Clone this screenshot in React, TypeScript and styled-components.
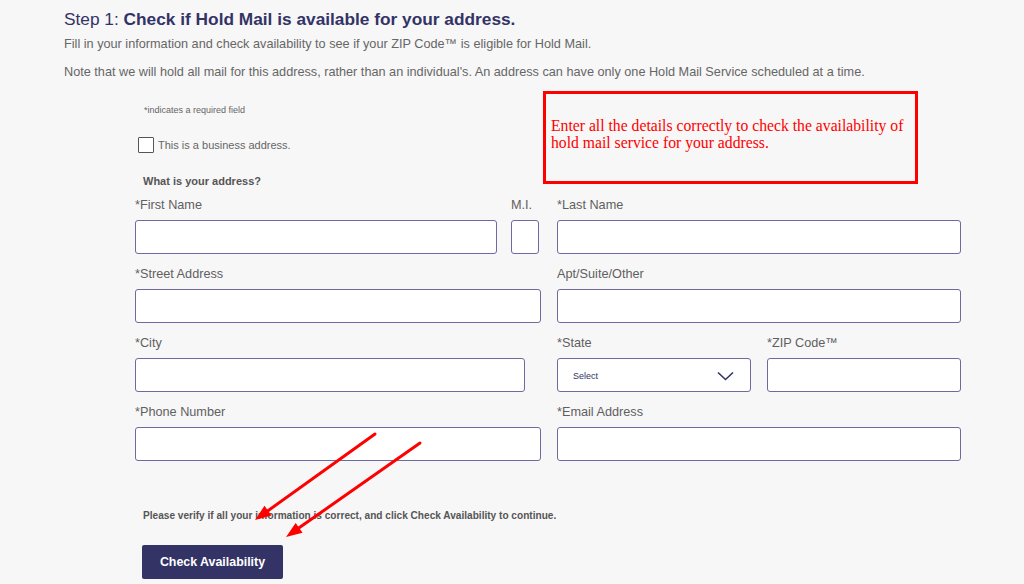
import styled, { createGlobalStyle } from "styled-components";

const GlobalStyle = createGlobalStyle`
  html, body {
    margin: 0;
    padding: 0;
    background: #f7f7f7;
  }
  body {
    font-family: "Liberation Sans", Arial, sans-serif;
  }
`;

const Page = styled.div`
  position: relative;
  width: 1024px;
  height: 584px;
  overflow: hidden;
  padding: 8px 0 0 64px;
  box-sizing: border-box;
  background: #f7f7f7;
`;

const Heading = styled.h1`
  margin: 0;
  font-size: 17.3px;
  line-height: 22px;
  font-weight: normal;
  color: #333366;
  b {
    font-weight: bold;
  }
`;

const Intro = styled.p<{ $mt: number }>`
  margin: ${(p) => p.$mt}px 0 0;
  font-size: 12.7px;
  line-height: 16px;
  color: #666;
`;

const Form = styled.form`
  margin: 0 0 0 71px;
`;

const TopSection = styled.div`
  display: flex;
  margin-top: 11px;
  height: 107px;
`;

const TopLeft = styled.div`
  width: 408px;
  display: flex;
  flex-direction: column;
`;

const RequiredNote = styled.div`
  font-size: 9px;
  line-height: 12px;
  color: #666;
  margin: 13px 0 0 9px;
`;

const CheckRow = styled.label`
  display: flex;
  align-items: center;
  gap: 4px;
  margin: 21px 0 0 3px;
  font-size: 11px;
  color: #666;
`;

const CheckBox = styled.span`
  width: 16px;
  height: 16px;
  box-sizing: border-box;
  border: 1px solid #555;
  border-radius: 1px;
  background: #fff;
`;

const AddressTitle = styled.div`
  margin: 21px 0 0 8px;
  font-size: 11px;
  line-height: 14px;
  font-weight: bold;
  color: #555;
`;

const Callout = styled.div`
  width: 375px;
  height: 93px;
  box-sizing: border-box;
  border: 3px solid #ff0000;
  padding: 23px 4px 0 5px;
  font-family: "Liberation Serif", "Times New Roman", serif;
  font-size: 15.7px;
  line-height: 17px;
  color: #ff0000;
`;

const Rows = styled.div`
  display: flex;
  flex-direction: column;
  gap: 13px;
`;

const Row = styled.div`
  display: flex;
`;

const Field = styled.div<{ $w: number; $ml?: number }>`
  width: ${(p) => p.$w}px;
  margin-left: ${(p) => p.$ml ?? 0}px;
  display: flex;
  flex-direction: column;
  gap: 7px;
`;

const Label = styled.span`
  font-size: 12.7px;
  line-height: 15px;
  color: #5f5f5f;
  white-space: nowrap;
`;

const Input = styled.div`
  height: 34px;
  box-sizing: border-box;
  background: #fff;
  border: 1px solid #6f6a9e;
  border-radius: 3px;
`;

const Select = styled(Input)`
  display: flex;
  align-items: center;
  justify-content: space-between;
  padding: 2px 16px 0 15px;
  font-size: 9px;
  color: #333366;
`;

const Verify = styled.div`
  margin: 49px 0 0 8px;
  font-size: 10.1px;
  line-height: 12px;
  font-weight: bold;
  color: #555;
`;

const SubmitButton = styled.button`
  margin: 23px 0 0 7px;
  width: 141px;
  height: 34px;
  border: none;
  border-radius: 2px;
  background: #333366;
  color: #fff;
  font-family: "Liberation Sans", Arial, sans-serif;
  font-size: 12.4px;
  font-weight: bold;
  padding: 0;
`;

const Overlay = styled.svg`
  position: absolute;
  left: 0;
  top: 0;
  pointer-events: none;
`;

function Arrow({ x1, y1, x2, y2 }: { x1: number; y1: number; x2: number; y2: number }) {
  const ang = Math.atan2(y2 - y1, x2 - x1);
  const len = 16;
  const half = 6;
  const bx = x2 - Math.cos(ang) * len;
  const by = y2 - Math.sin(ang) * len;
  const px = -Math.sin(ang) * half;
  const py = Math.cos(ang) * half;
  return (
    <g>
      <line x1={x1} y1={y1} x2={bx} y2={by} stroke="#ff0000" strokeWidth={3} strokeLinecap="round" />
      <polygon points={`${x2},${y2} ${bx + px},${by + py} ${bx - px},${by - py}`} fill="#ff0000" />
    </g>
  );
}

export default function App() {
  return (
    <>
      <GlobalStyle />
      <Page>
        <Heading>
          Step 1: <b>Check if Hold Mail is available for your address.</b>
        </Heading>
        <Intro $mt={6}>
          Fill in your information and check availability to see if your ZIP Code™ is eligible for Hold Mail.
        </Intro>
        <Intro $mt={12}>
          Note that we will hold all mail for this address, rather than an individual's. An address can have only one Hold Mail Service scheduled at a time.
        </Intro>
        <Form onSubmit={(e) => e.preventDefault()}>
          <TopSection>
            <TopLeft>
              <RequiredNote>*indicates a required field</RequiredNote>
              <CheckRow>
                <CheckBox />
                This is a business address.
              </CheckRow>
              <AddressTitle>What is your address?</AddressTitle>
            </TopLeft>
            <Callout>
              Enter all the details correctly to check the availability of hold mail service for your address.
            </Callout>
          </TopSection>
          <Rows>
            <Row>
              <Field $w={362}>
                <Label>*First Name</Label>
                <Input />
              </Field>
              <Field $w={28} $ml={14}>
                <Label>M.I.</Label>
                <Input />
              </Field>
              <Field $w={404} $ml={18}>
                <Label>*Last Name</Label>
                <Input />
              </Field>
            </Row>
            <Row>
              <Field $w={406}>
                <Label>*Street Address</Label>
                <Input />
              </Field>
              <Field $w={404} $ml={16}>
                <Label>Apt/Suite/Other</Label>
                <Input />
              </Field>
            </Row>
            <Row>
              <Field $w={390}>
                <Label>*City</Label>
                <Input />
              </Field>
              <Field $w={194} $ml={32}>
                <Label>*State</Label>
                <Select>
                  <span>Select</span>
                  <svg width="17" height="10" viewBox="0 0 17 10">
                    <path d="M1 1.5 L8.5 8.5 L16 1.5" fill="none" stroke="#333366" strokeWidth="1.6" />
                  </svg>
                </Select>
              </Field>
              <Field $w={194} $ml={16}>
                <Label>*ZIP Code™</Label>
                <Input />
              </Field>
            </Row>
            <Row>
              <Field $w={406}>
                <Label>*Phone Number</Label>
                <Input />
              </Field>
              <Field $w={404} $ml={16}>
                <Label>*Email Address</Label>
                <Input />
              </Field>
            </Row>
          </Rows>
          <Verify>Please verify if all your information is correct, and click Check Availability to continue.</Verify>
          <SubmitButton type="submit">Check Availability</SubmitButton>
        </Form>
        <Overlay width={1024} height={584}>
          <Arrow x1={375} y1={434} x2={255} y2={520} />
          <Arrow x1={420} y1={443} x2={286} y2={537} />
        </Overlay>
      </Page>
    </>
  );
}
